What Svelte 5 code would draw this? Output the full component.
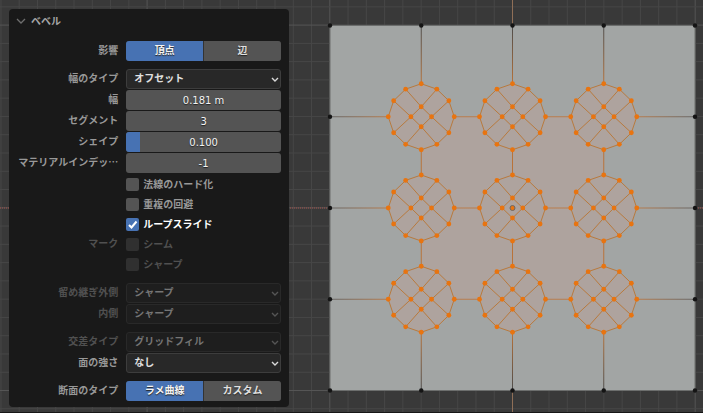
<script>
	let open = $state(true);
	let affect = $state("頂点");
	let profile = $state("ラメ曲線");
	let shape = $state("0.100");
	let shape_fill = $derived(Math.min(Number(shape) || 0, 1) * 90);

	let numbers = $state([
		{ id: "width", name: "幅", value: "0.181 m" },
		{ id: "segments", name: "セグメント", value: "3" }
	]);
	let checks = $state([
		{ id: "harden", group: "", name: "法線のハード化", on: false, off: false },
		{ id: "clamp", group: "", name: "重複の回避", on: false, off: false },
		{ id: "slide", group: "", name: "ループスライド", on: true, off: false },
		{ id: "seam", group: "マーク", name: "シーム", on: false, off: true },
		{ id: "sharp", group: "", name: "シャープ", on: false, off: true }
	]);

	// mesh, in viewport units
	const left = 330;
	const top = 26;
	const side = 365;
	const step = 91.25;
	const grid = 18.27;
	const cols = Array.from({ length: 40 }, (_, i) => 512.5 + (i - 29) * grid);
	const rows = Array.from({ length: 24 }, (_, i) => 208.3 + (i - 12) * grid);
	const ring = [[0, -33], [15.6, -27.6], [27.6, -16], [33, 0], [27.6, 16], [15.6, 27.6], [0, 33], [-15.6, 27.6], [-27.6, 16], [-33, 0], [-27.6, -16], [-15.6, -27.6]];
	const inner = [[0, -10], [10.3, 0], [0, 10], [-10.3, 0]];
	const cuts = "M-15.6-27.6L0-10L10.3 0L27.6 16M15.6-27.6L0-10L-10.3 0L-27.6 16M-27.6-16L-10.3 0L0 10L15.6 27.6M27.6-16L10.3 0L0 10L-15.6 27.6";
	const centers = [1, 2, 3].flatMap((r) => [1, 2, 3].map((c) => [left + c * step, top + r * step]));
	const corners = [0, 1, 2, 3, 4].flatMap((r) => [0, 1, 2, 3, 4].map((c) => [r, c])).filter(([r, c]) => r % 4 == 0 || c % 4 == 0);
</script>

{#snippet arrow()}
	<svg class="arrow" viewBox="0 0 8 5" aria-hidden="true"><path d="M1 1L4 4L7 1" /></svg>
{/snippet}

{#snippet dropdown(id, name, options, off)}
	<div class="row" class:off>
		<label class="name" for={id}>{name}</label>
		<div class="select">
			<select {id} disabled={off}>
				{#each options as option}
					<option>{option}</option>
				{/each}
			</select>
			{@render arrow()}
		</div>
	</div>
{/snippet}

<main class="viewport" lang="ja">
	<svg class="scene" viewBox="0 0 703 413" preserveAspectRatio="xMidYMid slice" aria-hidden="true">
		<defs>
			<linearGradient id="down" gradientUnits="userSpaceOnUse" x1="0" y1="26" x2="0" y2="391">
				<stop offset="0" stop-color="#4c4c4c" />
				<stop offset="0.16" stop-color="#b8733a" />
				<stop offset="0.84" stop-color="#b8733a" />
				<stop offset="1" stop-color="#4c4c4c" />
			</linearGradient>
			<linearGradient id="across" gradientUnits="userSpaceOnUse" x1="330" y1="0" x2="695" y2="0">
				<stop offset="0" stop-color="#666" />
				<stop offset="0.16" stop-color="#b97c4c" />
				<stop offset="0.84" stop-color="#b97c4c" />
				<stop offset="1" stop-color="#666" />
			</linearGradient>
		</defs>
		{#each cols as x, i}
			<line class="grid" class:major={(i - 29) % 10 == 0} x1={x} y1="0" x2={x} y2="413" />
		{/each}
		{#each rows as y, i}
			<line class="grid" class:major={(i - 12) % 10 == 0} x1="0" y1={y} x2="703" y2={y} />
		{/each}
		<path class="axis-x" d="M0 208.5H703" />
		<path class="axis-y" d="M512.5 0V413" />
		<rect class="plane" x={left} y={top} width={side} height={side} />
		<rect class="face" x={left + step} y={top + step} width={step * 2} height={step * 2} />
		{#each [1, 2, 3] as i}
			<path stroke="url(#down)" d="M{left + i * step} {top}v{side}" />
			<path stroke="url(#across)" d="M{left} {top + i * step}h{side}" />
		{/each}
		{#each centers as [x, y]}
			<g transform="translate({x} {y})">
				<polygon class="disc" points={ring.join(" ")} />
				<path class="edge" d={cuts} />
				{#each [...ring, ...inner] as [vx, vy]}
					<circle class="vert" cx={vx} cy={vy} r="2.4" />
				{/each}
			</g>
		{/each}
		{#each corners as [r, c]}
			<circle class="corner" cx={left + c * step} cy={top + r * step} r="2.2" />
		{/each}
		<circle class="origin" cx="512.5" cy="208.5" r="2.5" />
	</svg>

	<section class="panel">
		<button class="title" aria-expanded={open} onclick={() => (open = !open)}>
			<svg class="fold" viewBox="0 0 10 6" aria-hidden="true"><path d="M1 1L5 5L9 1" /></svg>
			ベベル
		</button>
		{#if open}
			<div class="group">
				<div class="row">
					<span class="name">影響</span>
					<div class="tabs" role="group" aria-label="影響">
						{#each ["頂点", "辺"] as tab}
							<button class:active={affect == tab} aria-pressed={affect == tab} onclick={() => (affect = tab)}>{tab}</button>
						{/each}
					</div>
				</div>
			</div>

			<div class="group">
				{@render dropdown("offset", "幅のタイプ", ["オフセット"], false)}
				{#each numbers as number}
					<div class="row">
						<label class="name" for={number.id}>{number.name}</label>
						<input class="number" id={number.id} type="text" bind:value={number.value} />
					</div>
				{/each}
				<div class="row">
					<label class="name" for="shape">シェイプ</label>
					<div class="slider">
						<div class="fill" style="width:{shape_fill}%"></div>
						<input class="number" id="shape" type="text" bind:value={shape} />
					</div>
				</div>
				<div class="row">
					<label class="name" for="material">マテリアルインデッ…</label>
					<input class="number" id="material" type="text" value="-1" />
				</div>
				<div class="checks">
					{#each checks as check}
						<div class="row" class:off={check.off}>
							<span class="name">{check.group}</span>
							<label class="check" class:on={check.on} for={check.id}>
								<span class="box">
									<input id={check.id} type="checkbox" bind:checked={check.on} disabled={check.off} />
									{#if check.on}
										<svg class="tick" viewBox="0 0 13 13" aria-hidden="true"><path d="M3 7L5.5 9.5L10.5 3.5" /></svg>
									{/if}
								</span>
								{check.name}
							</label>
						</div>
					{/each}
				</div>
			</div>

			<div class="group">
				{@render dropdown("outer", "留め継ぎ外側", ["シャープ"], true)}
				{@render dropdown("inner", "内側", ["シャープ"], true)}
			</div>

			<div class="group">
				{@render dropdown("cross", "交差タイプ", ["グリッドフィル"], true)}
				{@render dropdown("strength", "面の強さ", ["なし"], false)}
			</div>

			<div class="group">
				<div class="row">
					<span class="name">断面のタイプ</span>
					<div class="tabs" role="group" aria-label="断面のタイプ">
						{#each ["ラメ曲線", "カスタム"] as tab}
							<button class:active={profile == tab} aria-pressed={profile == tab} onclick={() => (profile = tab)}>{tab}</button>
						{/each}
					</div>
				</div>
			</div>
		{/if}
	</section>
</main>

<style>
	:global(body) {
		background: #393939;
	}
	.viewport {
		position: relative;
		box-sizing: border-box;
		min-height: 100vh;
		padding: 9px 9px 5px;
		border-bottom: 1px solid #161616;
		background: #393939;
		font-family: "Noto Sans CJK JP", sans-serif;
		font-size: 10px;
		font-weight: 700;
		line-height: 18px;
	}
	.scene {
		position: absolute;
		inset: 0;
		width: 100%;
		height: 100%;
		fill: none;
	}
	.grid {
		stroke: #474747;
	}
	.major {
		stroke: #555;
	}
	.axis-x {
		stroke: #a5504a;
		stroke-dasharray: 1 1;
	}
	.axis-y {
		stroke: #8f6f57;
	}
	.plane {
		fill: #a2a5a4;
		stroke: #6c6e6d;
	}
	.face {
		fill: #aea39e;
	}
	.disc {
		fill: #aea39e;
		stroke: #b87a3e;
	}
	.edge {
		stroke: #b87a3e;
	}
	.vert {
		fill: #e87410;
	}
	.corner {
		fill: #141414;
	}
	.origin {
		fill: #e87410;
		stroke: #6d6865;
	}
	.panel {
		position: relative;
		box-sizing: border-box;
		width: 100%;
		max-width: 280px;
		padding: 2px 8px 6px 6px;
		border-radius: 4px;
		background: #191919;
		color: #989898;
	}
	button,
	input,
	select {
		margin: 0;
		padding: 0;
		border: none;
		font: inherit;
		color: inherit;
	}
	.title {
		display: flex;
		align-items: center;
		gap: 5px;
		width: 100%;
		height: 20px;
		padding-left: 1px;
		margin-bottom: 10px;
		background: none;
		color: #a6a6a6;
	}
	.fold {
		width: 10px;
		height: 6px;
		fill: none;
		stroke: #6e6e6e;
		stroke-width: 1.3;
	}
	.group {
		display: grid;
		gap: 1px;
		margin-bottom: 8px;
	}
	.group:last-child {
		margin-bottom: 0;
	}
	.row {
		display: grid;
		grid-template-columns: 2fr 3fr;
		gap: 8px;
		height: 20px;
	}
	.name {
		text-align: right;
		white-space: nowrap;
	}
	.off {
		color: #505050;
	}
	.tabs {
		display: grid;
		grid-template-columns: 1fr 1fr;
		gap: 1px;
		overflow: hidden;
		border-radius: 3px;
		background: #333;
	}
	.tabs button {
		padding-bottom: 2px;
		background: #545454;
		color: #e0e0e0;
		text-shadow: 0 1px 1px #222;
	}
	.tabs .active {
		background: #4772b3;
		color: #f4f4f4;
	}
	.number {
		box-sizing: border-box;
		width: 100%;
		height: 20px;
		border-radius: 3px;
		background: #545454;
		color: #f4f4f4;
		font-family: "DejaVu Sans", sans-serif;
		font-weight: 400;
		text-align: center;
		text-shadow: 0 1px 1px #222;
	}
	.slider {
		position: relative;
		overflow: hidden;
		border-radius: 3px;
		background: #545454;
	}
	.slider .number {
		position: relative;
		display: block;
		background: none;
	}
	.fill {
		position: absolute;
		inset: 0 auto 0 0;
		background: #4772b3;
	}
	.select {
		position: relative;
	}
	select {
		display: block;
		box-sizing: border-box;
		width: 100%;
		height: 20px;
		padding: 0 16px 2px 7px;
		border: 1px solid #3d3d3d;
		border-radius: 3px;
		background: #282828;
		color: #e0e0e0;
		line-height: 16px;
		appearance: none;
	}
	select:disabled {
		border-color: #292929;
		background: #1e1e1e;
		color: #757575;
		opacity: 1;
	}
	.arrow {
		position: absolute;
		top: 8px;
		right: 2px;
		width: 8px;
		height: 5px;
		fill: none;
		stroke: #d9d9d9;
		stroke-width: 1.4;
		pointer-events: none;
	}
	.off .arrow {
		stroke: #555;
	}
	.checks {
		padding-bottom: 1px;
	}
	.check {
		display: flex;
		align-items: center;
		gap: 4px;
	}
	.on {
		color: #fff;
	}
	.box {
		position: relative;
		display: flex;
	}
	.box input {
		width: 13px;
		height: 13px;
		border-radius: 2px;
		background: #545454;
		appearance: none;
	}
	.box input:checked {
		background: #4772b3;
	}
	.box input:disabled {
		background: #303030;
	}
	.tick {
		position: absolute;
		inset: 0;
		fill: none;
		stroke: #fff;
		stroke-width: 2;
		pointer-events: none;
	}
</style>
